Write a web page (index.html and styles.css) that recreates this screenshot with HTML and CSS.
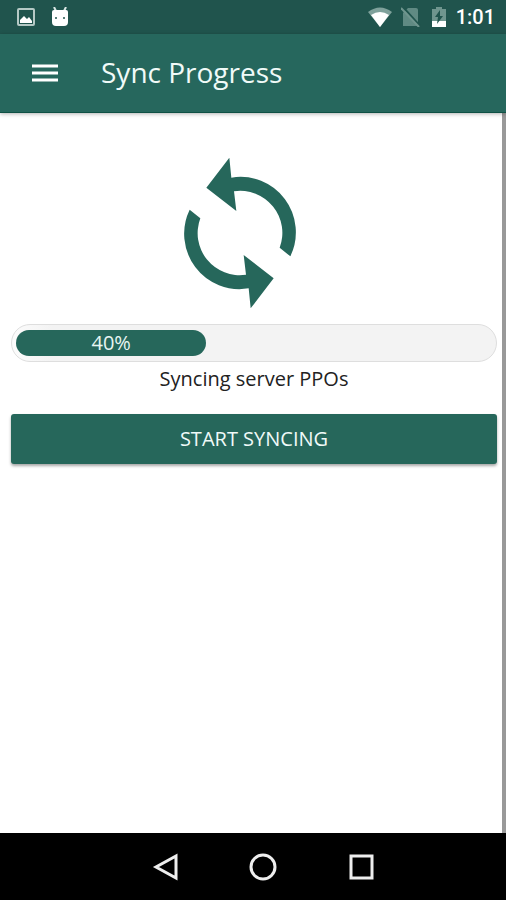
FILE: index.html
```html
<!DOCTYPE html>
<html lang="en">
<head>
<meta charset="utf-8">
<meta name="viewport" content="width=device-width, initial-scale=1">
<title>Sync Progress</title>
<link rel="stylesheet" href="styles.css">
</head>
<body>
<div class="status">
  <svg class="status-icon" width="18" height="18" viewBox="0 0 18 18" aria-hidden="true">
    <rect x="1" y="1" width="16" height="16" rx="1" fill="none" stroke="#b5c9c5" stroke-width="2"/>
    <path d="M3 15v-3l4-4 3 3 2-2 3 4v2z" fill="#fff"/>
  </svg>
  <svg class="status-icon" width="18" height="20" viewBox="0 0 18 20" aria-hidden="true">
    <path d="M3 0l2 4M15 0l-2 4" stroke="#dce8e5" stroke-width="2"/>
    <path d="M1 5q0-2 2-2h12q2 0 2 2v10q0 4-4 4H5q-4 0-4-4z" fill="#fff"/>
    <circle cx="5" cy="11" r="1" fill="#20544d"/><circle cx="13" cy="11" r="1" fill="#20544d"/>
  </svg>
  <span class="spacer"></span>
  <svg class="wifi" width="24" height="20" viewBox="0 0 24 20" aria-hidden="true">
    <path d="M0 5Q12-4 24 5L12 20z" fill="#7fa19b"/>
    <path d="M3 8q9-6 18 0l-9 12z" fill="#fff"/>
  </svg>
  <svg class="sim" width="20" height="20" viewBox="0 0 20 20" aria-hidden="true">
    <path d="M7 1h8q2 0 2 2v16H2V6z" fill="#608a83"/>
    <path d="M2 0l18 20" stroke="#20544d" stroke-width="2"/>
    <path d="M0 1l18 19" stroke="#6f958e" stroke-width="2"/>
  </svg>
  <svg class="battery" width="14" height="20" viewBox="0 0 14 20" aria-hidden="true">
    <path d="M4 0h6v2h4v12H0V2h4z" fill="#6f958e"/>
    <path d="M0 14h14v6H0z" fill="#fff"/>
    <path d="M8 3L3 10h3l-1 7 6-8H8z" fill="#20544d"/>
  </svg>
  <time class="clock">1:01</time>
</div>
<header class="bar">
  <button class="menu" type="button" aria-label="Menu">
    <svg width="28" height="20" viewBox="0 0 28 20" aria-hidden="true"><path d="M1 3h26M1 10h26M1 17h26" stroke="#fff" stroke-width="3"/></svg>
  </button>
  <h1 class="title">Sync Progress</h1>
</header>
<main class="content">
  <div class="figure">
    <svg width="112" height="152" viewBox="71 50 336 456" fill="#26675b" aria-hidden="true">
      <path d="M138 142L207 52L213 112A166 166 0 0 1 390 348L358 322A126 126 0 0 0 221 153L228 212Z"/>
      <path d="M340 414L271 504L265 444A166 166 0 0 1 88 208L120 234A126 126 0 0 0 257 403L250 344Z"/>
    </svg>
  </div>
  <div class="track" role="progressbar" aria-valuenow="40" aria-valuemin="0" aria-valuemax="100" aria-labelledby="sync-label">
    <div class="fill" style="width: 40%">40%</div>
  </div>
  <p class="label" id="sync-label">Syncing server PPOs</p>
  <button class="start" type="button">START SYNCING</button>
</main>
<nav class="nav">
  <button class="key" type="button" aria-label="Back">
    <svg width="28" height="28" viewBox="0 0 28 28" aria-hidden="true"><path d="M25 3v22L5 14z"/></svg>
  </button>
  <button class="key" type="button" aria-label="Home">
    <svg width="28" height="28" viewBox="0 0 28 28" aria-hidden="true"><circle cx="14" cy="14" r="12"/></svg>
  </button>
  <button class="key" type="button" aria-label="Recent apps">
    <svg width="28" height="28" viewBox="0 0 28 28" aria-hidden="true"><rect x="4" y="3" width="21" height="22"/></svg>
  </button>
</nav>
</body>
</html>
```
FILE: styles.css
```css
* {
  box-sizing: border-box;
}

body {
  margin: 0;
  min-height: 100vh;
  display: flex;
  flex-direction: column;
  background: #fff;
  color: #222;
  font-family: "Open Sans", "Noto Sans", sans-serif;
}

button {
  padding: 0;
  border: 0;
  background: none;
  font: inherit;
  cursor: pointer;
}

svg {
  display: block;
}

.status {
  display: flex;
  align-items: center;
  height: 34px;
  padding: 0 11px 0 17px;
  background: #20544d;
}

.status-icon {
  margin-right: 16px;
}

.spacer {
  flex: 1;
}

.wifi {
  margin-right: 9px;
}

.sim {
  margin-right: 11px;
}

.battery {
  margin-right: 10px;
}

.clock {
  color: #fff;
  font: 500 20px/24px Roboto, sans-serif;
}

.bar {
  position: relative;
  display: flex;
  align-items: center;
  gap: 42px;
  height: 79px;
  padding: 0 31px;
  border-bottom: 1px solid #0f5145;
  background: #26675d;
  box-shadow: 0 1px 4px rgba(0, 0, 0, 0.3);
}

.title {
  margin: 0;
  padding-bottom: 2px;
  color: #f0faf8;
  font-size: 28px;
  font-weight: 400;
  line-height: 36px;
}

.content {
  flex: 1;
  padding: 44px 5px 0 11px;
  border-right: 4px solid #999;
}

.figure {
  display: flex;
  justify-content: center;
  padding-right: 28px;
  margin-bottom: 15px;
}

.track {
  height: 38px;
  padding: 5px 4px;
  border: 1px solid #dedede;
  border-radius: 19px;
  background: linear-gradient(to right, #fcfcfc, #f3f3f3 40px);
}

.fill {
  height: 26px;
  border-radius: 13px;
  background: #26675b;
  color: #e8f5f2;
  font-size: 20px;
  line-height: 26px;
  text-align: center;
}

.label {
  margin: 3px 0 21px;
  font-size: 20px;
  line-height: 28px;
  text-align: center;
}

.start {
  display: block;
  width: 100%;
  height: 50px;
  padding-bottom: 2px;
  border-radius: 3px;
  background: #26675b;
  color: #f0faf8;
  font-size: 20px;
  box-shadow: 0 2px 3px rgba(0, 0, 0, 0.35);
}

.nav {
  display: flex;
  align-items: center;
  justify-content: center;
  height: 67px;
  padding-left: 20px;
  background: #000;
}

.key {
  display: flex;
  justify-content: center;
  width: 98px;
}

.key svg {
  fill: none;
  stroke: #eee;
  stroke-width: 3;
}
```
